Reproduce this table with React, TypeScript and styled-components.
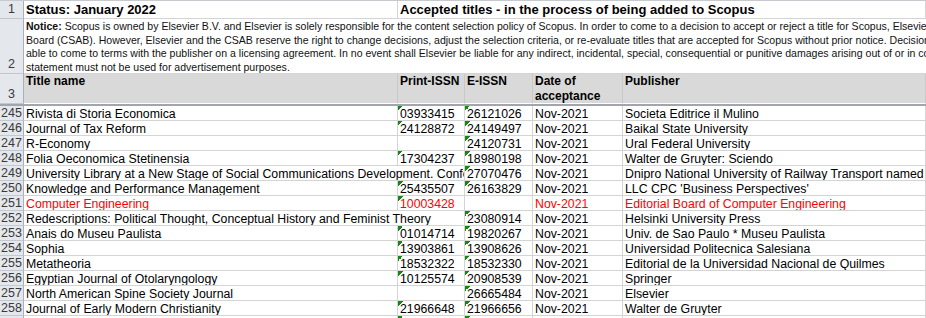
import styled, { createGlobalStyle } from "styled-components";

const GlobalStyle = createGlobalStyle`
  html, body {
    margin: 0;
    padding: 0;
    background: #fff;
    overflow: hidden;
  }
  body {
    font-family: "Liberation Sans", Arial, sans-serif;
    color: #000;
  }
`;

type Row = {
  n: number;
  title: string;
  print?: string;
  e?: string;
  date: string;
  publisher: string;
  red?: boolean;
};

const rows: Row[] = [
  { n: 245, title: "Rivista di Storia Economica", print: "03933415", e: "26121026", date: "Nov-2021", publisher: "Societa Editrice il Mulino" },
  { n: 246, title: "Journal of Tax Reform", print: "24128872", e: "24149497", date: "Nov-2021", publisher: "Baikal State University" },
  { n: 247, title: "R-Economy", e: "24120731", date: "Nov-2021", publisher: "Ural Federal University" },
  { n: 248, title: "Folia Oeconomica Stetinensia", print: "17304237", e: "18980198", date: "Nov-2021", publisher: "Walter de Gruyter: Sciendo" },
  {
    n: 249,
    title: "University Library at a New Stage of Social Communications Development. Conference Proceedings",
    e: "27070476",
    date: "Nov-2021",
    publisher: "Dnipro National University of Railway Transport named after Academician V. Lazaryan",
  },
  { n: 250, title: "Knowledge and Performance Management", print: "25435507", e: "26163829", date: "Nov-2021", publisher: "LLC CPC 'Business Perspectives'" },
  { n: 251, title: "Computer Engineering", print: "10003428", date: "Nov-2021", publisher: "Editorial Board of Computer Engineering", red: true },
  {
    n: 252,
    title: "Redescriptions: Political Thought, Conceptual History and Feminist Theory",
    e: "23080914",
    date: "Nov-2021",
    publisher: "Helsinki University Press",
  },
  { n: 253, title: "Anais do Museu Paulista", print: "01014714", e: "19820267", date: "Nov-2021", publisher: "Univ. de Sao Paulo * Museu Paulista" },
  { n: 254, title: "Sophia", print: "13903861", e: "13908626", date: "Nov-2021", publisher: "Universidad Politecnica Salesiana" },
  { n: 255, title: "Metatheoria", print: "18532322", e: "18532330", date: "Nov-2021", publisher: "Editorial de la Universidad Nacional de Quilmes" },
  { n: 256, title: "Egyptian Journal of Otolaryngology", print: "10125574", e: "20908539", date: "Nov-2021", publisher: "Springer" },
  { n: 257, title: "North American Spine Society Journal", e: "26665484", date: "Nov-2021", publisher: "Elsevier" },
  { n: 258, title: "Journal of Early Modern Christianity", print: "21966648", e: "21966656", date: "Nov-2021", publisher: "Walter de Gruyter" },
  { n: 259, title: "Journal of Urban Ecology", print: "20585543", e: "20585543", date: "Nov-2021", publisher: "Oxford University Press" },
];

const notice = [
  "Scopus is owned by Elsevier B.V. and Elsevier is solely responsible for the content selection policy of Scopus. In order to come to a decision to accept or reject a title for Scopus, Elsevier has established the Content Selection & Advisory",
  "Board (CSAB). However, Elsevier and the CSAB reserve the right to change decisions, adjust the selection criteria, or re-evaluate titles that are accepted for Scopus without prior notice. Decisions of the CSAB are final. Elsevier may not be",
  "able to come to terms with the publisher on a licensing agreement. In no event shall Elsevier be liable for any indirect, incidental, special, consequential or punitive damages arising out of or in connection with this list. This",
  "statement must not be used for advertisement purposes.",
];

export default function App() {
  return (
    <>
      <GlobalStyle />
      <Sheet>
        <RowHead>1</RowHead>
        <StatusCell>Status: January 2022</StatusCell>
        <StatusCell $span={4}>Accepted titles - in the process of being added to Scopus</StatusCell>

        <RowHead $bottom>2</RowHead>
        <NoticeCell>
          {notice.map((line, i) => (
            <NoticeLine key={i}>
              {i === 0 && <b>Notice: </b>}
              {line}
            </NoticeLine>
          ))}
        </NoticeCell>

        <RowHead $bottom>3</RowHead>
        <HeadCell>Title name</HeadCell>
        <HeadCell>Print-ISSN</HeadCell>
        <HeadCell>E-ISSN</HeadCell>
        <HeadCell>
          Date of
          <br />
          acceptance
        </HeadCell>
        <HeadCell>Publisher</HeadCell>

        <Freeze />

        {rows.map((r) => (
          <DataRow key={r.n} row={r} />
        ))}
      </Sheet>
    </>
  );
}

// a long title runs on over an empty Print-ISSN cell, as Excel does
function DataRow({ row }: { row: Row }) {
  const spill = !row.print;
  const spillWide = spill && row.title.length > 40;
  return (
    <>
      <RowHead>{row.n}</RowHead>
      <Cell $red={row.red} $span={spillWide ? 2 : 1}>
        {row.title}
      </Cell>
      {!spillWide && (
        <Cell $red={row.red} $flag={!!row.print}>
          {row.print}
        </Cell>
      )}
      <Cell $red={row.red} $flag={!!row.e}>
        {row.e}
      </Cell>
      <Cell $red={row.red}>{row.date}</Cell>
      <Cell $red={row.red}>{row.publisher}</Cell>
    </>
  );
}

const Sheet = styled.div`
  display: grid;
  grid-template-columns: 24px 374px 67px 68px 90px 303px;
  grid-template-rows: 18px 55px 30px 2px;
  grid-auto-rows: 15px;
  width: 926px;
  border-top: 1px solid #c6c9ce;
`;

const RowHead = styled.div<{ $bottom?: boolean }>`
  box-sizing: border-box;
  display: flex;
  justify-content: center;
  align-items: ${(p) => (p.$bottom ? "flex-end" : "center")};
  padding-bottom: ${(p) => (p.$bottom ? "1px" : "0")};
  background: #e4e7ec;
  border-right: 1px solid #a9b0bb;
  border-bottom: 1px solid #c3c8d0;
  color: #3a3a3a;
  font-size: 12.5px;
  line-height: 15px;
  overflow: hidden;
`;

const StatusCell = styled.div<{ $span?: number }>`
  box-sizing: border-box;
  grid-column: span ${(p) => p.$span ?? 1};
  padding: 0 2px;
  border-right: 1px solid #d4d4d4;
  border-bottom: 1px solid #d4d4d4;
  font-size: 13px;
  font-weight: bold;
  line-height: 18px;
  white-space: nowrap;
  overflow: hidden;
`;

const NoticeCell = styled.div`
  box-sizing: border-box;
  grid-column: span 5;
  padding: 1px 2px 0;
  border-bottom: 1px solid #d4d4d4;
  overflow: hidden;
`;

const NoticeLine = styled.div`
  font-size: 10.55px;
  line-height: 13.7px;
  white-space: nowrap;
  color: #111;

  b {
    font-weight: bold;
  }
`;

const HeadCell = styled.div`
  box-sizing: border-box;
  padding: 0 2px;
  background: #d9d9d9;
  border-right: 1px solid #c9c9c9;
  border-bottom: 1px solid #ffffff;
  font-size: 12px;
  font-weight: bold;
  line-height: 14.5px;
  white-space: nowrap;
  overflow: hidden;
`;

const Freeze = styled.div`
  grid-column: 1 / -1;
  background: #a2a6ac;
`;

const Cell = styled.div<{ $red?: boolean; $flag?: boolean; $span?: number }>`
  box-sizing: border-box;
  grid-column: span ${(p) => p.$span ?? 1};
  padding: 0 2px;
  border-right: 1px solid #d4d4d4;
  border-bottom: 1px solid #d4d4d4;
  background: ${(p) =>
    p.$flag
      ? "linear-gradient(135deg, #128a12 50%, transparent 50%) no-repeat 0 0 / 5px 5px, #fff"
      : "#fff"};
  color: ${(p) => (p.$red ? "#ff0000" : "#000")};
  font-size: 12.3px;
  line-height: 16px;
  white-space: nowrap;
  overflow: hidden;
`;
